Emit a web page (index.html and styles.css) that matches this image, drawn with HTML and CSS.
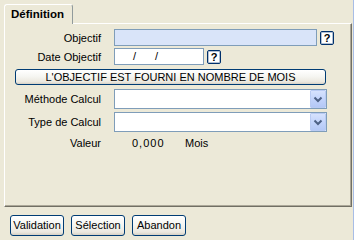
FILE: index.html
```html
<!DOCTYPE html>
<html>
	<head>
		<meta http-equiv="content-type" content="text/html; charset=utf-8" />
		<link rel="stylesheet" href="styles.css">
	</head>

	<body>
		<div class="window">
			<div class="tabs">
				<div class="tab">Définition</div>
			</div>

			<div class="panel">
				<div class="row row-first">
					<span class="lbl">Objectif</span>
					<div class="txt txt-required txt-long"></div>
					<span class="help">?</span>
				</div>
				<div class="row row-date">
					<span class="lbl">Date Objectif</span>
					<div class="txt txt-date"><span class="slash">/</span><span class="slash slash-2">/</span></div>
					<span class="help">?</span>
				</div>

				<div class="btn btn-wide">L'OBJECTIF EST FOURNI EN NOMBRE DE MOIS</div>

				<div class="row row-combo">
					<span class="lbl">Méthode Calcul</span>
					<div class="combo">
						<span class="combo-arrow">
							<svg width="14" height="16" viewBox="0 0 14 16"><polyline points="3.5,6.5 7,10 10.5,6.5" fill="none" stroke="#4d6185" stroke-width="2" /></svg>
						</span>
					</div>
				</div>
				<div class="row row-combo row-combo-2">
					<span class="lbl">Type de Calcul</span>
					<div class="combo">
						<span class="combo-arrow">
							<svg width="14" height="16" viewBox="0 0 14 16"><polyline points="3.5,6.5 7,10 10.5,6.5" fill="none" stroke="#4d6185" stroke-width="2" /></svg>
						</span>
					</div>
				</div>

				<div class="row row-value">
					<span class="lbl">Valeur</span>
					<span class="val">0,000</span>
					<span class="unit">Mois</span>
				</div>
			</div>

			<div class="actions">
				<div class="btn btn-action">Validation</div>
				<div class="btn btn-action">Sélection</div>
				<div class="btn btn-action">Abandon</div>
			</div>
		</div>
	</body>
</html>
```

FILE: styles.css
```css
body {
	margin: 0;
	background: #ece9d8;
	font-family: "Liberation Sans", Arial, sans-serif;
	font-size: 11px;
	color: #000;
}

.window {
	width: 353px;
	height: 240px;
	border-right: 1px solid #a8bde6;
}

/* tab strip */
.tabs {
	display: flex;
	height: 19px;
	padding: 4px 0 0 4px;
}

.tab {
	position: relative;
	z-index: 1;
	box-sizing: border-box;
	width: 69px;
	height: 20px;
	padding: 1px 0 0 6px;
	border: 1px solid;
	border-color: #fff #919b9c transparent #fff;
	border-bottom: none;
	border-radius: 3px 3px 0 0;
	background: #ece9d8;
	font-weight: bold;
	font-size: 11.5px;
	line-height: 16px;
}

.panel {
	box-sizing: border-box;
	width: 348px;
	height: 184px;
	margin-left: 4px;
	padding-top: 5px;
	border: 1px solid;
	border-color: #fff #716f64 #716f64 #fff;
	box-shadow: inset -1px -1px 0 #aca899;
}

/* form rows */
.row {
	display: flex;
	align-items: center;
	height: 17px;
}

.row-date { margin-top: 2px; }
.row-combo { height: 20px; margin-top: 4px; }
.row-combo-2 { margin-top: 3px; }
.row-value { height: 14px; margin-top: 4px; }

.lbl {
	flex: none;
	width: 96px;
	margin-right: 13px;
	text-align: right;
}

.txt {
	box-sizing: border-box;
	height: 17px;
	border: 1px solid #7f9db9;
	background: #fff;
	line-height: 15px;
}

.txt-required { background: #d9e4f9; }
.txt-long { width: 203px; }
.txt-date { width: 90px; padding-left: 18px; }

.slash-2 { margin-left: 19px; }

.help {
	box-sizing: border-box;
	width: 14px;
	height: 14px;
	margin-left: 3px;
	border: 1px solid #00306b;
	border-radius: 2px;
	box-shadow: inset 0 0 0 1px rgba(0, 48, 107, .3);
	background: #fff;
	font-weight: bold;
	font-size: 11px;
	line-height: 12px;
	text-align: center;
}

.combo {
	box-sizing: border-box;
	display: flex;
	justify-content: flex-end;
	width: 213px;
	height: 20px;
	border: 1px solid #7f9db9;
	background: #fff;
}

.combo-arrow {
	box-sizing: border-box;
	display: flex;
	align-items: center;
	justify-content: center;
	width: 16px;
	height: 18px;
	border: 1px solid #b9cbf3;
	border-radius: 1px;
	background: linear-gradient(#d6e2fd, #c3d4fb 50%, #b4c8f6);
}

.val {
	width: 53px;
	margin-left: 18px;
	letter-spacing: 1px;
}

/* buttons */
.btn {
	box-sizing: border-box;
	border: 1px solid #003c74;
	border-radius: 3px;
	background: linear-gradient(#fff, #f6f6f2 45%, #ebe8df 85%, #d6d0c5);
	text-align: center;
}

.btn-wide {
	width: 311px;
	height: 16px;
	margin: 4px 0 0 10px;
	line-height: 14px;
}

.actions {
	display: flex;
	gap: 7px;
	margin-top: 8px;
	padding-left: 10px;
}

.btn-action {
	width: 54px;
	height: 21px;
	line-height: 19px;
}
```
